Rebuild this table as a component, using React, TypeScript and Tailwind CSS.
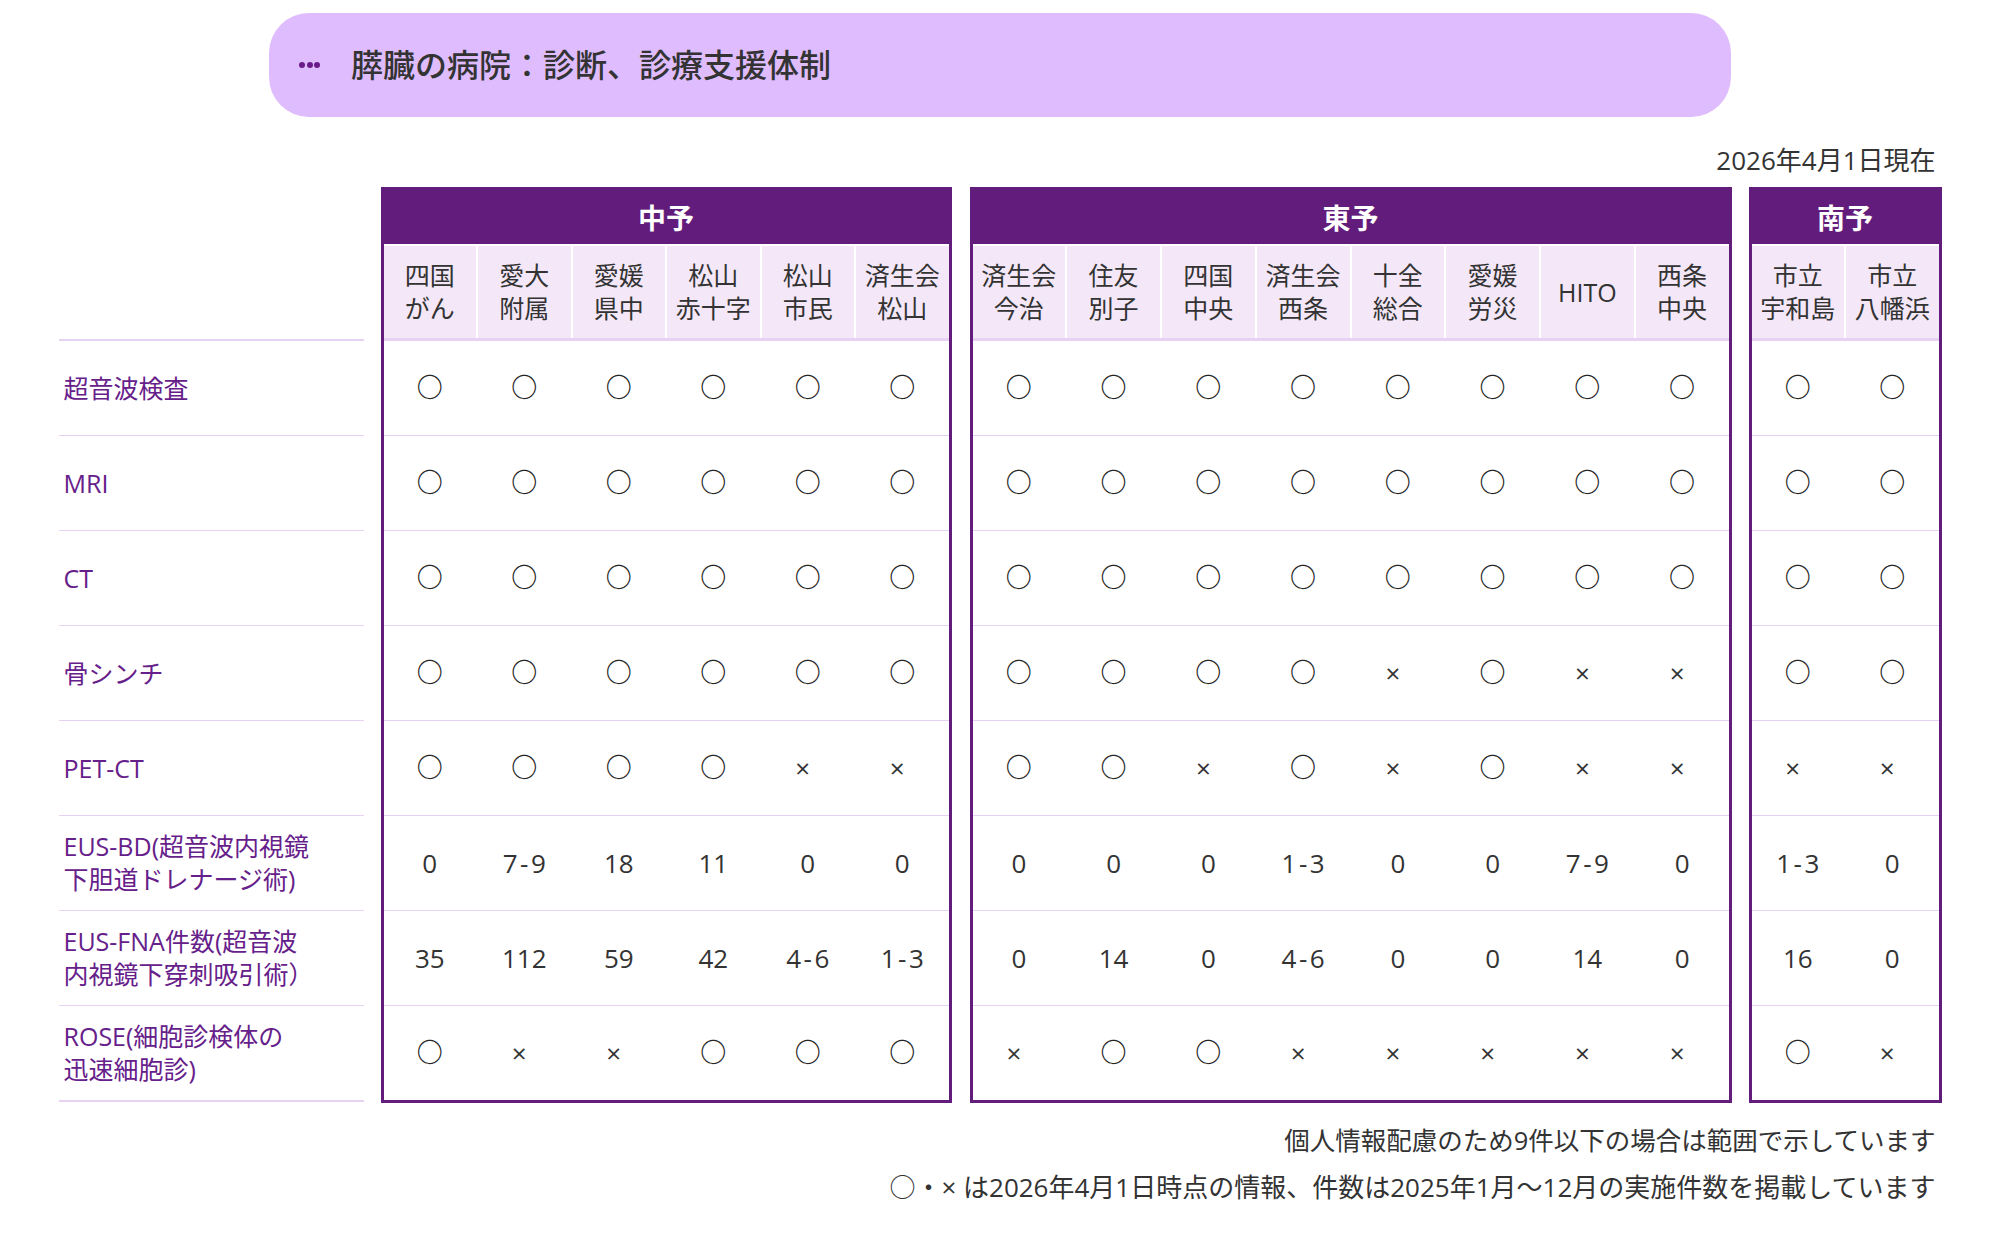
import React from "react";

type Group = {
  name: string;
  width: string;
  gap: string;
  grid: string;
  cols: string[][];
};

const groups: Group[] = [
  {
    name: "中予",
    width: "w-[571px]",
    gap: "",
    grid: "grid-cols-6",
    cols: [
      ["四国", "がん"],
      ["愛大", "附属"],
      ["愛媛", "県中"],
      ["松山", "赤十字"],
      ["松山", "市民"],
      ["済生会", "松山"],
    ],
  },
  {
    name: "東予",
    width: "w-[762px]",
    gap: "ml-[18px]",
    grid: "grid-cols-8",
    cols: [
      ["済生会", "今治"],
      ["住友", "別子"],
      ["四国", "中央"],
      ["済生会", "西条"],
      ["十全", "総合"],
      ["愛媛", "労災"],
      ["HITO"],
      ["西条", "中央"],
    ],
  },
  {
    name: "南予",
    width: "w-[193px]",
    gap: "ml-[17px]",
    grid: "grid-cols-2",
    cols: [
      ["市立", "宇和島"],
      ["市立", "八幡浜"],
    ],
  },
];

const rows: { label: string[]; values: string[] }[] = [
  { label: ["超音波検査"], values: "○ ○ ○ ○ ○ ○ ○ ○ ○ ○ ○ ○ ○ ○ ○ ○".split(" ") },
  { label: ["MRI"], values: "○ ○ ○ ○ ○ ○ ○ ○ ○ ○ ○ ○ ○ ○ ○ ○".split(" ") },
  { label: ["CT"], values: "○ ○ ○ ○ ○ ○ ○ ○ ○ ○ ○ ○ ○ ○ ○ ○".split(" ") },
  { label: ["骨シンチ"], values: "○ ○ ○ ○ ○ ○ ○ ○ ○ ○ × ○ × × ○ ○".split(" ") },
  { label: ["PET-CT"], values: "○ ○ ○ ○ × × ○ ○ × ○ × ○ × × × ×".split(" ") },
  {
    label: ["EUS-BD(超音波内視鏡", "下胆道ドレナージ術)"],
    values: "0 7-9 18 11 0 0 0 0 0 1-3 0 0 7-9 0 1-3 0".split(" "),
  },
  {
    label: ["EUS-FNA件数(超音波", "内視鏡下穿刺吸引術）"],
    values: "35 112 59 42 4-6 1-3 0 14 0 4-6 0 0 14 0 16 0".split(" "),
  },
  {
    label: ["ROSE(細胞診検体の", "迅速細胞診)"],
    values: "○ × × ○ ○ ○ × ○ ○ × × × × × ○ ×".split(" "),
  },
];

const offsets = [0, 6, 14];

function Cell({ v }: { v: string }) {
  if (v === "×") return <div className="flex items-center justify-center pr-[10px] text-[26px]">×</div>;
  if (v === "○")
    return (
      <div className="flex items-center justify-center pb-[2px] text-[26px] font-semibold text-[#262626]">○</div>
    );
  const [a, b] = v.split("-");
  return (
    <div className="flex items-center justify-center text-[26px]">
      {a}
      {b !== undefined && (
        <>
          <span className="mx-[2.5px]">-</span>
          {b}
        </>
      )}
    </div>
  );
}

function RegionTable({ g, start }: { g: Group; start: number }) {
  return (
    <div className={`${g.width} ${g.gap} shrink-0 border-[3px] border-[#621c7b] bg-white`}>
      <div className="flex h-[54px] items-center justify-center bg-[#621c7b] pt-[1px] text-[28px] font-bold text-white">
        {g.name}
      </div>
      <div className={`mt-[2px] grid ${g.grid} gap-x-[2px] bg-white`}>
        {g.cols.map((c, i) => (
          <div
            key={i}
            className="flex h-[92px] flex-col items-center justify-center bg-[#f4e8f8] text-[25px] leading-[33px] text-[#333]"
          >
            {c.map((l) => (
              <span key={l}>{l}</span>
            ))}
          </div>
        ))}
      </div>
      <div className="h-[3px] bg-[#e8d2f3]" />
      {rows.map((r, ri) => (
        <div
          key={ri}
          className={`grid ${g.grid} gap-x-[2px] text-[#333] ${
            ri < rows.length - 1 ? "h-[95px] border-b border-[#e8d2f3]" : "h-[94px]"
          }`}
        >
          {g.cols.map((_, ci) => (
            <Cell key={ci} v={r.values[start + ci]} />
          ))}
        </div>
      ))}
    </div>
  );
}

export default function App() {
  return (
    <div className="min-h-screen bg-white font-['Open_Sans','Noto_Sans_CJK_JP',sans-serif] text-[#333]">
      <div className="mx-auto w-[1883px] pt-[13px]">
        <div className="mx-auto flex h-[104px] w-[1462px] items-center rounded-[40px] bg-[#dfbcfd] pl-[30px]">
          <div className="flex gap-[1.5px]">
            <span className="h-[6px] w-[6px] rounded-full bg-[#6a1b8a]" />
            <span className="h-[6px] w-[6px] rounded-full bg-[#6a1b8a]" />
            <span className="h-[6px] w-[6px] rounded-full bg-[#6a1b8a]" />
          </div>
          <h1 className="ml-[31px] text-[32px] font-medium text-[#333]">膵臓の病院：診断、診療支援体制</h1>
        </div>

        <p className="mt-[27px] pr-[6px] text-right text-[26px] leading-[33px]">2026年4月1日現在</p>

        <div className="mt-[10px] flex items-start">
          <div className="w-[305px] shrink-0">
            <div className="h-[152px]" />
            <div className="h-[2px] bg-[#e8d2f3]" />
            {rows.map((r, ri) => (
              <div
                key={ri}
                className={`flex flex-col justify-center pl-[5px] text-[25px] leading-[33px] text-[#66208a] ${
                  ri < rows.length - 1 ? "h-[95px] border-b border-[#e8d2f3]" : "h-[96px] border-b-2 border-[#e8d2f3]"
                }`}
              >
                {r.label.map((l) => (
                  <span key={l}>{l}</span>
                ))}
              </div>
            ))}
          </div>
          <div className="ml-[17px] flex">
            {groups.map((g, i) => (
              <RegionTable key={g.name} g={g} start={offsets[i]} />
            ))}
          </div>
        </div>

        <div className="mt-[14px] pr-[6px] text-right leading-[47px]">
          <p className="text-[25.5px]">個人情報配慮のため9件以下の場合は範囲で示しています</p>
          <p className="text-[26px]">○・× は2026年4月1日時点の情報、件数は2025年1月～12月の実施件数を掲載しています</p>
        </div>
      </div>
    </div>
  );
}
